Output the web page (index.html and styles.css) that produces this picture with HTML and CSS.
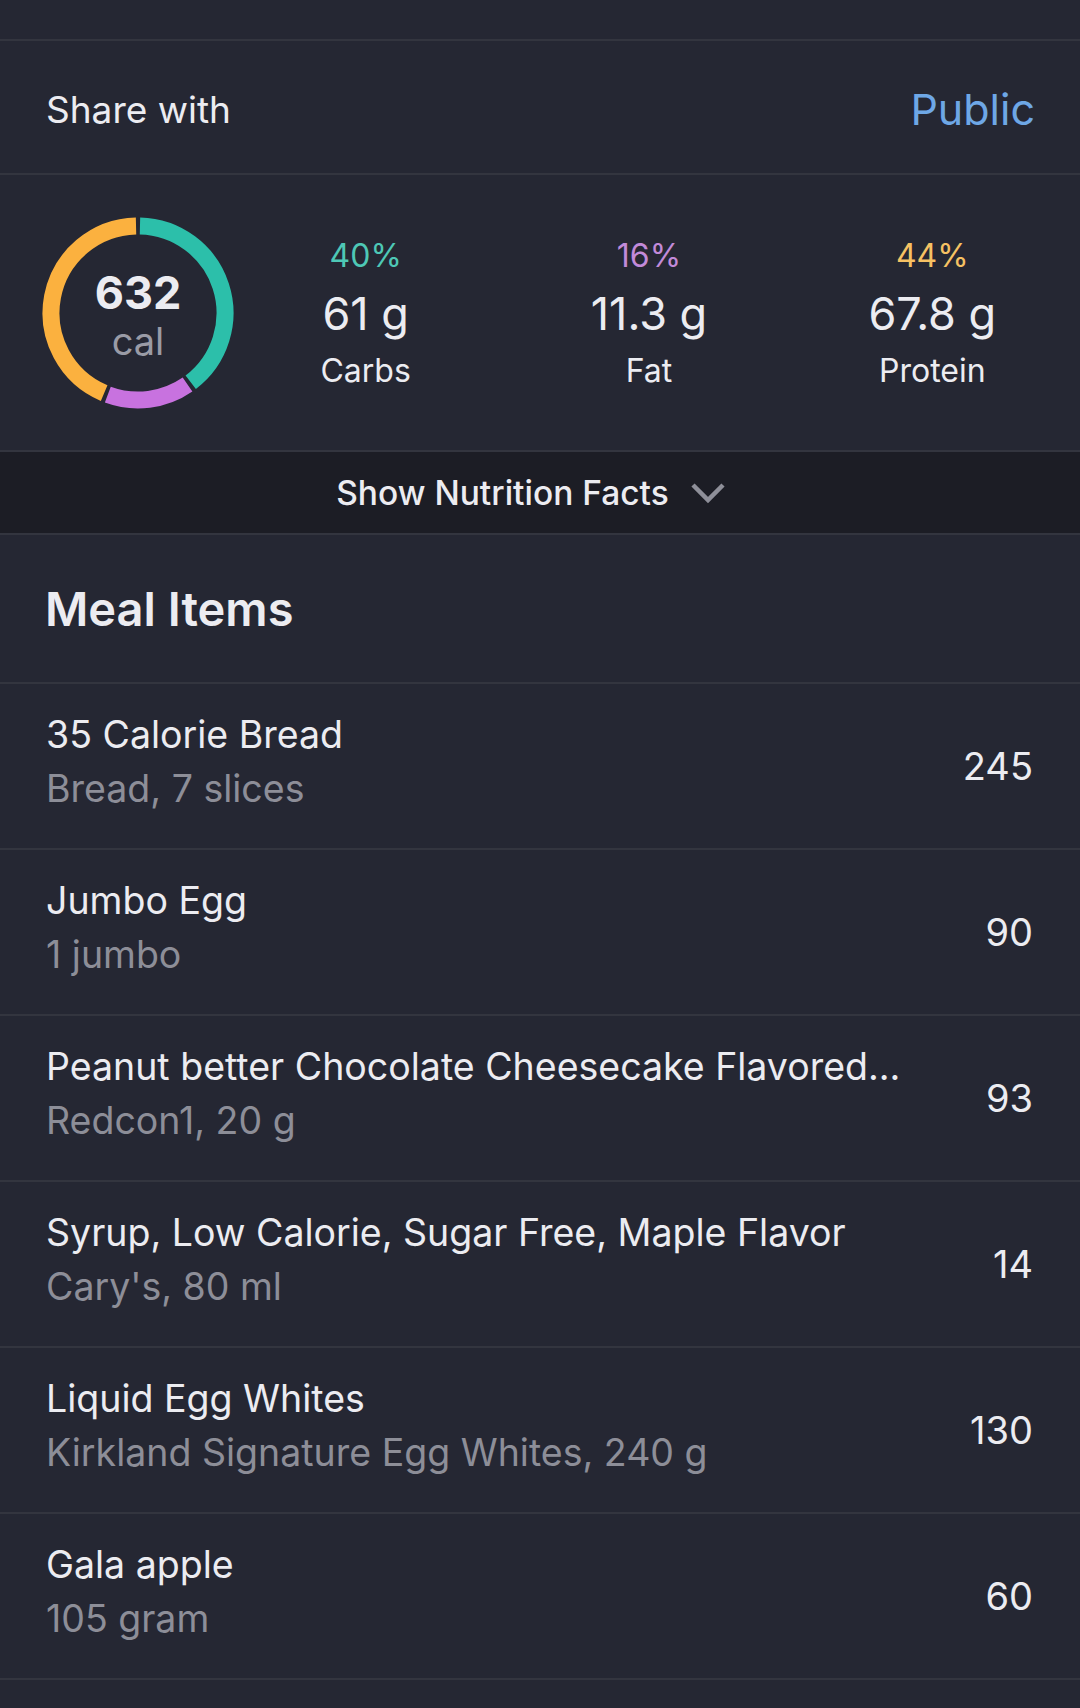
FILE: index.html
```html
<html lang="en">
<head>
    <meta charset="UTF-8">
    <meta name="viewport" content="width=device-width, initial-scale=1.0">
    <title>Meal</title>
    <link rel="stylesheet" href="styles.css">
</head>
<body>
    <div class="top-strip"></div>

    <div class="share-row">
        <span class="share-label">Share with</span>
        <span class="share-value">Public</span>
    </div>

    <div class="macros">
        <div class="ring-box">
            <svg class="ring" width="192" height="192" viewBox="0 0 192 192">
                <path d="M97.97 9.02 A87 87 0 0 1 148.72 165.21" stroke="#2cbfaa" />
                <path d="M145.53 167.52 A87 87 0 0 1 65.82 177.60" stroke="#c872df" />
                <path d="M62.15 176.14 A87 87 0 0 1 94.03 9.02" stroke="#fbb13f" />
            </svg>
            <div class="ring-text">
                <div class="cal-num">632</div>
                <div class="cal-unit">cal</div>
            </div>
        </div>
        <div class="macro">
            <div class="pct carbs">40%</div>
            <div class="grams">61 g</div>
            <div class="macro-name">Carbs</div>
        </div>
        <div class="macro">
            <div class="pct fat">16%</div>
            <div class="grams">11.3 g</div>
            <div class="macro-name">Fat</div>
        </div>
        <div class="macro">
            <div class="pct protein">44%</div>
            <div class="grams">67.8 g</div>
            <div class="macro-name">Protein</div>
        </div>
    </div>

    <div class="facts-toggle">
        <span>Show Nutrition Facts</span>
        <svg class="chevron" width="36" height="24" viewBox="0 0 36 24">
            <path d="M3 4 L18 19 L33 4" />
        </svg>
    </div>

    <div class="meal-header">Meal Items</div>

    <div class="item">
        <div class="item-text">
            <div class="item-name">35 Calorie Bread</div>
            <div class="item-desc">Bread, 7 slices</div>
        </div>
        <div class="item-cal">245</div>
    </div>
    <div class="item">
        <div class="item-text">
            <div class="item-name">Jumbo Egg</div>
            <div class="item-desc">1 jumbo</div>
        </div>
        <div class="item-cal">90</div>
    </div>
    <div class="item">
        <div class="item-text">
            <div class="item-name">Peanut better Chocolate Cheesecake Flavored...</div>
            <div class="item-desc">Redcon1, 20 g</div>
        </div>
        <div class="item-cal">93</div>
    </div>
    <div class="item">
        <div class="item-text">
            <div class="item-name">Syrup, Low Calorie, Sugar Free, Maple Flavor</div>
            <div class="item-desc">Cary's, 80 ml</div>
        </div>
        <div class="item-cal">14</div>
    </div>
    <div class="item">
        <div class="item-text">
            <div class="item-name">Liquid Egg Whites</div>
            <div class="item-desc">Kirkland Signature Egg Whites, 240 g</div>
        </div>
        <div class="item-cal">130</div>
    </div>
    <div class="item">
        <div class="item-text">
            <div class="item-name">Gala apple</div>
            <div class="item-desc">105 gram</div>
        </div>
        <div class="item-cal">60</div>
    </div>
</body>
</html>
```

FILE: styles.css
```css
body {
    margin: 0;
    background-color: #252733;
    color: #ececf1;
    font-family: Inter, "Noto Sans", sans-serif;
}

.top-strip {
    height: 39px;
    border-bottom: 2px solid #33353f;
}

/******/
/* SHARE */
/*******/

.share-row {
    height: 128px;
    display: flex;
    align-items: center;
    justify-content: space-between;
    padding: 4px 45px 0 46px;
    border-bottom: 2px solid #33353f;
}

.share-label {
    font-size: 37px;
}

.share-value {
    font-size: 43px;
    color: #6ea7e6;
}

/******/
/* MACROS */
/*******/

.macros {
    height: 275px;
    display: flex;
    align-items: center;
    padding-right: 6px;
    border-bottom: 2px solid #33353f;
}

.ring-box {
    display: grid;
    place-items: center;
    width: 192px;
    height: 192px;
    margin-left: 42px;
    margin-right: -10px;
}

.ring, .ring-text {
    grid-area: 1 / 1;
}

.ring path {
    fill: none;
    stroke-width: 17;
}

.ring-text {
    text-align: center;
    margin-top: 7px;
}

.cal-num {
    font-size: 45px;
    font-weight: 700;
    line-height: 50px;
}

.cal-unit {
    font-size: 38px;
    color: #9a9ba6;
    line-height: 46px;
}

.macro {
    flex: 1;
    text-align: center;
    margin-top: 0;
}

.pct {
    font-size: 32px;
    line-height: 50px;
}

.pct.carbs { color: #4ec8b6; }
.pct.fat { color: #c28ad9; }
.pct.protein { color: #f6c163; }

.grams {
    font-size: 45px;
    line-height: 66px;
}

.macro-name {
    font-size: 32px;
    line-height: 48px;
}

/******/
/* TOGGLE */
/*******/

.facts-toggle {
    height: 81px;
    display: flex;
    align-items: center;
    justify-content: center;
    gap: 21px;
    background-color: #1c1d25;
    border-bottom: 2px solid #33353f;
    font-size: 33.5px;
    font-weight: 500;
    padding-right: 18px;
}

.chevron path {
    fill: none;
    stroke: #8e8f99;
    stroke-width: 4.5;
}

/******/
/* MEAL ITEMS */
/*******/

.meal-header {
    height: 147px;
    display: flex;
    align-items: center;
    padding-left: 45px;
    font-size: 47px;
    font-weight: 600;
    border-bottom: 2px solid #33353f;
}

.item {
    height: 164px;
    display: flex;
    align-items: center;
    justify-content: space-between;
    padding: 0 47px 0 46px;
    border-bottom: 2px solid #33353f;
}

.item-text {
    margin-bottom: 9px;
}

.item-name {
    font-size: 37.5px;
    line-height: 55px;
}

.item-desc {
    font-size: 37.5px;
    line-height: 54px;
    color: #8d8e98;
}

.item-cal {
    font-size: 38px;
}
```
